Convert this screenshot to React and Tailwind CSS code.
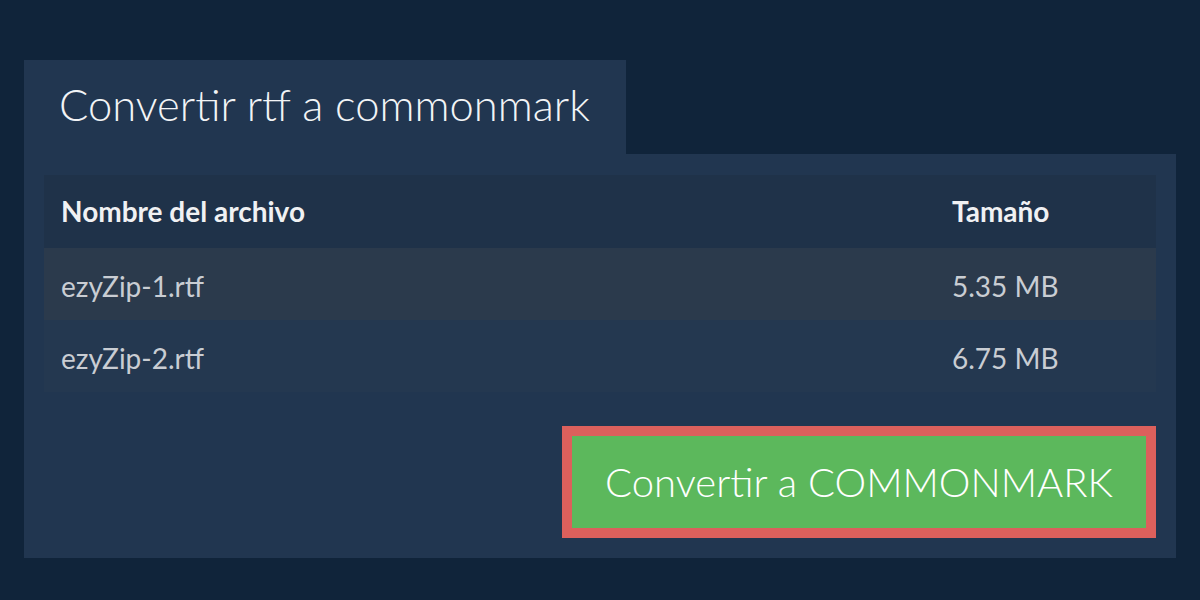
export default function App() {
  const files = [
    { name: "ezyZip-1.rtf", size: "5.35 MB" },
    { name: "ezyZip-2.rtf", size: "6.75 MB" },
  ];

  return (
    <div
      className="w-[1200px] h-[600px] bg-[#10243a] pt-[60px] px-[24px]"
      style={{ fontFamily: "Lato, 'Open Sans', sans-serif" }}
    >
      <div className="w-[602px] h-[94px] bg-[#213650] flex items-center pl-[35px] pb-[4px]">
        <h1 className="text-[43.5px] font-light text-[#f2f4f6] leading-none">Convertir rtf a commonmark</h1>
      </div>
      <div className="bg-[#213650] px-[20px] pt-[21px] pb-[20px] w-[1152px]">
        <div className="w-full">
          <div className="flex h-[73px] items-center bg-[#1f3249] px-[17px] pb-[2px] text-[28px] font-bold text-[#f0f1f3]">
            <div className="flex-1">Nombre del archivo</div>
            <div className="w-[187px]">Tamaño</div>
          </div>
          {files.map((f, i) => (
            <div
              key={f.name}
              className={`flex h-[72px] items-center px-[17px] pt-[4px] text-[28px] text-[#c9cdd3] ${
                i === 0 ? "bg-[#2b3a4c]" : "bg-[#243850]"
              }`}
            >
              <div className="flex-1">{f.name}</div>
              <div className="w-[187px]">{f.size}</div>
            </div>
          ))}
        </div>
        <div className="flex justify-end pt-[34px]">
          <button className="w-[594px] h-[112px] border-[10px] border-[#dc605c] bg-[#5cb85c] text-white text-[40px] font-light">
            Convertir a COMMONMARK
          </button>
        </div>
      </div>
    </div>
  );
}
